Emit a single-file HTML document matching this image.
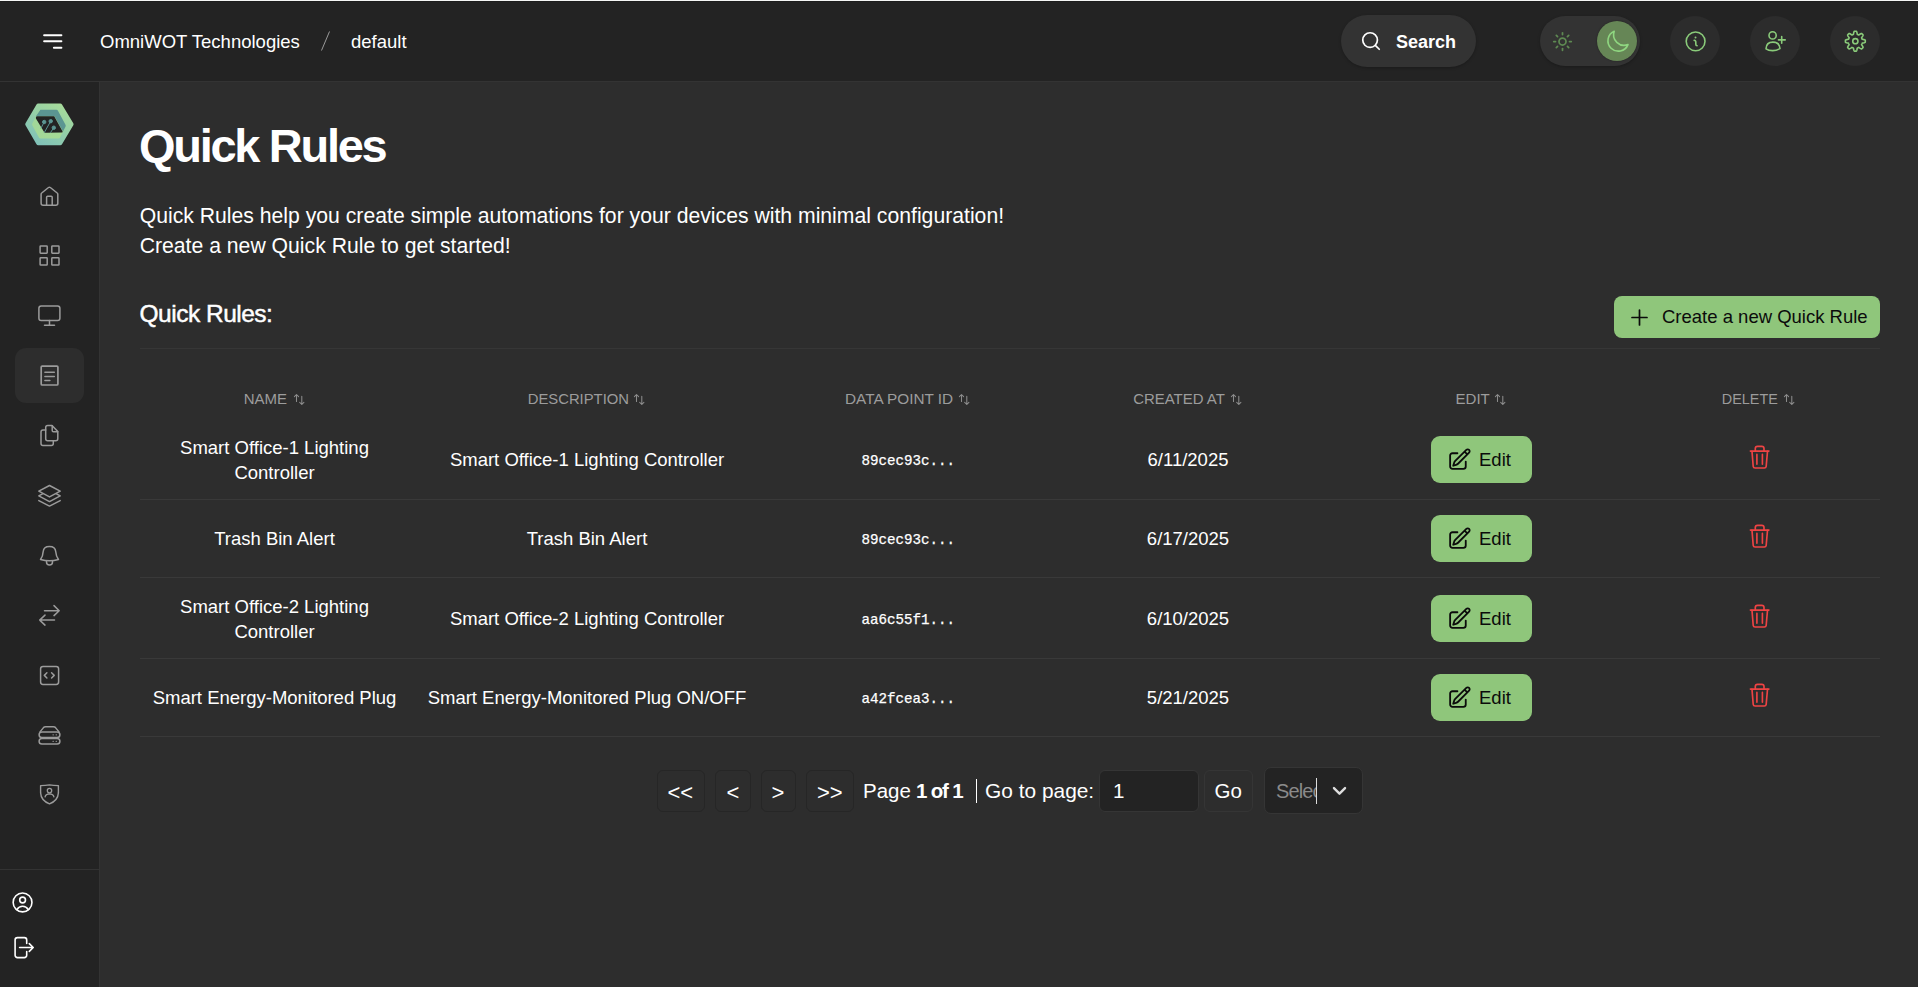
<!DOCTYPE html>
<html><head><meta charset="utf-8">
<style>
*{box-sizing:border-box;margin:0;padding:0}
html,body{width:1918px;height:987px;overflow:hidden;background:#2d2d2d;font-family:"Liberation Sans",sans-serif;color:#fff}
.abs{position:absolute}
#topline{left:0;top:0;width:1918px;height:1px;background:#f5f6f5}
#topline2{left:0;top:1px;width:1918px;height:1px;background:#1d1d1d}
#header{left:0;top:2px;width:1918px;height:79px;background:#232323}
#hborder{left:0;top:81px;width:1918px;height:1px;background:#333}
#sidebar{left:0;top:82px;width:99px;height:905px;background:#232323}
#sborder{left:99px;top:82px;width:1px;height:905px;background:#333}
.t{position:absolute;white-space:nowrap;line-height:1}
svg{position:absolute;overflow:visible}


.hd{position:absolute;white-space:nowrap;line-height:1;font-size:15.2px;color:#9c9c9c}
.cell{position:absolute;white-space:nowrap;line-height:25px;font-size:18.5px;color:#fff;text-align:center;transform:translateX(-50%)}
.mono{position:absolute;white-space:nowrap;line-height:1;font-family:"Liberation Mono",monospace;font-size:14.2px;color:#fff;transform:translateX(-50%);-webkit-text-stroke:0.25px #fff}
.rb{position:absolute;left:140px;width:1740px;height:1px;background:#393939}
.editbtn{position:absolute;left:1431px;width:101px;height:47px;border-radius:9px;background:#8fc67b}
.editbtn svg{left:16px;top:11.2px}
.editbtn span{position:absolute;left:48px;top:15px;font-size:18.5px;color:#0b0b0b;line-height:1;white-space:nowrap}
.pgb{position:absolute;top:770px;height:42px;border:1px solid #262626;border-radius:6px;background:#2d2d2d}

</style></head><body>
<div class="abs" id="topline"></div>
<div class="abs" id="topline2"></div>
<div class="abs" id="header"></div>
<div class="abs" id="hborder"></div>
<div class="abs" id="sidebar"></div>
<div class="abs" id="sborder"></div>

<!-- header content -->
<svg style="left:43px;top:34px" width="20" height="15" viewBox="0 0 20 15"><g stroke="#fff" stroke-width="2" stroke-linecap="round"><line x1="1.1" y1="1.3" x2="18.4" y2="1.3"/><line x1="1.1" y1="7.3" x2="18.4" y2="7.3"/><line x1="10.9" y1="13.8" x2="18.4" y2="13.8"/></g></svg>
<div class="t" style="left:100px;top:33px;font-size:18.5px">OmniWOT Technologies</div>
<svg style="left:321px;top:31px" width="9" height="20"><line x1="8.5" y1="0.5" x2="0.5" y2="19.5" stroke="#9a9a9a" stroke-width="1"/></svg>
<div class="t" style="left:351px;top:33px;font-size:18.5px">default</div>


<!-- search pill -->
<div class="abs" style="left:1341px;top:15px;width:135px;height:52px;border-radius:26px;background:#333;box-shadow:0 1px 3px rgba(0,0,0,.25)"></div>
<svg style="left:1359.9px;top:29.8px" width="22" height="22" viewBox="0 0 24 24" fill="none" stroke="#fff" stroke-width="1.85" stroke-linecap="round"><circle cx="11" cy="11" r="8"/><path d="m21 21-4.3-4.3"/></svg>
<div class="t" style="left:1396px;top:33px;font-size:18px;font-weight:700">Search</div>
<!-- theme toggle -->
<div class="abs" style="left:1540px;top:16px;width:100px;height:50px;border-radius:25px;background:#333;box-shadow:0 1px 3px rgba(0,0,0,.25)"></div>
<svg style="left:1552px;top:31px" width="21" height="21" viewBox="0 0 24 24" fill="none" stroke="#5e8a52" stroke-width="2" stroke-linecap="round"><circle cx="12" cy="12" r="4"/><path d="M12 2v2"/><path d="M12 20v2"/><path d="m4.93 4.93 1.41 1.41"/><path d="m17.66 17.66 1.41 1.41"/><path d="M2 12h2"/><path d="M20 12h2"/><path d="m6.34 17.66-1.41 1.41"/><path d="m19.07 4.93-1.41 1.41"/></svg>
<div class="abs" style="left:1597px;top:21px;width:40px;height:40px;border-radius:20px;background:#668656;box-shadow:0 0 2px rgba(0,0,0,.4)"></div>
<svg style="left:1590px;top:16px" width="50" height="50" viewBox="1590 16 50 50" fill="none" stroke="#8fd680" stroke-width="1.6" stroke-linecap="round" stroke-linejoin="round"><path d="M1614.2 31.2A10.4 10.4 0 1 0 1628 44.6A10.6 10.6 0 0 1 1614.2 31.2Z"/></svg>
<!-- icon circles -->
<div class="abs" style="left:1670px;top:16px;width:50px;height:50px;border-radius:25px;background:#2c2c2c"></div>
<div class="abs" style="left:1750px;top:16px;width:50px;height:50px;border-radius:25px;background:#2c2c2c"></div>
<div class="abs" style="left:1830px;top:16px;width:50px;height:50px;border-radius:25px;background:#2c2c2c"></div>
<svg style="left:1660px;top:16px" width="230" height="50" viewBox="1660 16 230 50" fill="none" stroke="#8acb7a" stroke-width="1.6" stroke-linecap="round" stroke-linejoin="round">
<circle cx="1695.6" cy="41.35" r="9.4"/><path d="M1695.5 37.5h.05" stroke-width="1.9"/><path d="M1694.2 40.4Q1695.8 40.3 1695.8 41.9V44.3Q1695.8 45.8 1697.1 45.8"/>
<circle cx="1772.6" cy="35.4" r="3.6"/><path d="M1766 48.8Q1766.3 42.1 1772.9 42.1Q1779.6 42.1 1780 48.6Q1776 50.7 1772.5 50.6Q1768.5 50.6 1766 48.8Z"/><path d="M1781.7 36.6v6.7M1778.5 39.9h6.7"/>
<path d="M1865.30 41.20 L1865.30 41.46 L1865.29 41.72 L1865.27 41.98 L1865.25 42.24 L1864.93 42.46 L1864.45 42.64 L1863.95 42.79 L1863.43 42.92 L1862.92 43.02 L1862.44 43.10 L1862.11 43.20 L1862.05 43.38 L1862.00 43.55 L1861.93 43.73 L1861.86 43.90 L1861.79 44.07 L1861.71 44.24 L1861.63 44.40 L1861.55 44.56 L1861.71 44.87 L1861.99 45.27 L1862.28 45.70 L1862.55 46.15 L1862.81 46.62 L1863.01 47.08 L1863.08 47.46 L1862.92 47.66 L1862.74 47.86 L1862.57 48.05 L1862.39 48.24 L1862.20 48.42 L1862.01 48.59 L1861.81 48.77 L1861.61 48.93 L1861.23 48.86 L1860.77 48.66 L1860.30 48.40 L1859.85 48.13 L1859.42 47.84 L1859.02 47.56 L1858.71 47.40 L1858.55 47.48 L1858.39 47.56 L1858.22 47.64 L1858.05 47.71 L1857.88 47.78 L1857.70 47.85 L1857.53 47.90 L1857.35 47.96 L1857.25 48.29 L1857.17 48.77 L1857.07 49.28 L1856.94 49.80 L1856.79 50.30 L1856.61 50.78 L1856.39 51.10 L1856.13 51.12 L1855.87 51.14 L1855.61 51.15 L1855.35 51.15 L1855.09 51.15 L1854.83 51.14 L1854.57 51.12 L1854.31 51.10 L1854.09 50.78 L1853.91 50.30 L1853.76 49.80 L1853.63 49.28 L1853.53 48.77 L1853.45 48.29 L1853.35 47.96 L1853.17 47.90 L1853.00 47.85 L1852.82 47.78 L1852.65 47.71 L1852.48 47.64 L1852.31 47.56 L1852.15 47.48 L1851.99 47.40 L1851.68 47.56 L1851.28 47.84 L1850.85 48.13 L1850.40 48.40 L1849.93 48.66 L1849.47 48.86 L1849.09 48.93 L1848.89 48.77 L1848.69 48.59 L1848.50 48.42 L1848.31 48.24 L1848.13 48.05 L1847.96 47.86 L1847.78 47.66 L1847.62 47.46 L1847.69 47.08 L1847.89 46.62 L1848.15 46.15 L1848.42 45.70 L1848.71 45.27 L1848.99 44.87 L1849.15 44.56 L1849.07 44.40 L1848.99 44.24 L1848.91 44.07 L1848.84 43.90 L1848.77 43.73 L1848.70 43.55 L1848.65 43.38 L1848.59 43.20 L1848.26 43.10 L1847.78 43.02 L1847.27 42.92 L1846.75 42.79 L1846.25 42.64 L1845.77 42.46 L1845.45 42.24 L1845.43 41.98 L1845.41 41.72 L1845.40 41.46 L1845.40 41.20 L1845.40 40.94 L1845.41 40.68 L1845.43 40.42 L1845.45 40.16 L1845.77 39.94 L1846.25 39.76 L1846.75 39.61 L1847.27 39.48 L1847.78 39.38 L1848.26 39.30 L1848.59 39.20 L1848.65 39.02 L1848.70 38.85 L1848.77 38.67 L1848.84 38.50 L1848.91 38.33 L1848.99 38.16 L1849.07 38.00 L1849.15 37.84 L1848.99 37.53 L1848.71 37.13 L1848.42 36.70 L1848.15 36.25 L1847.89 35.78 L1847.69 35.32 L1847.62 34.94 L1847.78 34.74 L1847.96 34.54 L1848.13 34.35 L1848.31 34.16 L1848.50 33.98 L1848.69 33.81 L1848.89 33.63 L1849.09 33.47 L1849.47 33.54 L1849.93 33.74 L1850.40 34.00 L1850.85 34.27 L1851.28 34.56 L1851.68 34.84 L1851.99 35.00 L1852.15 34.92 L1852.31 34.84 L1852.48 34.76 L1852.65 34.69 L1852.82 34.62 L1853.00 34.55 L1853.17 34.50 L1853.35 34.44 L1853.45 34.11 L1853.53 33.63 L1853.63 33.12 L1853.76 32.60 L1853.91 32.10 L1854.09 31.62 L1854.31 31.30 L1854.57 31.28 L1854.83 31.26 L1855.09 31.25 L1855.35 31.25 L1855.61 31.25 L1855.87 31.26 L1856.13 31.28 L1856.39 31.30 L1856.61 31.62 L1856.79 32.10 L1856.94 32.60 L1857.07 33.12 L1857.17 33.63 L1857.25 34.11 L1857.35 34.44 L1857.53 34.50 L1857.70 34.55 L1857.88 34.62 L1858.05 34.69 L1858.22 34.76 L1858.39 34.84 L1858.55 34.92 L1858.71 35.00 L1859.02 34.84 L1859.42 34.56 L1859.85 34.27 L1860.30 34.00 L1860.77 33.74 L1861.23 33.54 L1861.61 33.47 L1861.81 33.63 L1862.01 33.81 L1862.20 33.98 L1862.39 34.16 L1862.57 34.35 L1862.74 34.54 L1862.92 34.74 L1863.08 34.94 L1863.01 35.32 L1862.81 35.78 L1862.55 36.25 L1862.28 36.70 L1861.99 37.13 L1861.71 37.53 L1861.55 37.84 L1861.63 38.00 L1861.71 38.16 L1861.79 38.33 L1861.86 38.50 L1861.93 38.67 L1862.00 38.85 L1862.05 39.02 L1862.11 39.20 L1862.44 39.30 L1862.92 39.38 L1863.43 39.48 L1863.95 39.61 L1864.45 39.76 L1864.93 39.94 L1865.25 40.16 L1865.27 40.42 L1865.29 40.68 L1865.30 40.94Z"/><circle cx="1855.35" cy="41.2" r="2.6"/>
</svg>

<!-- logo -->
<svg style="left:24px;top:101px" width="52" height="47" viewBox="0 0 52 47">
<defs><linearGradient id="lg1" x1="0.15" y1="1" x2="0.85" y2="0"><stop offset="0" stop-color="#7dbfba"/><stop offset="1" stop-color="#a9dd98"/></linearGradient>
<linearGradient id="lg2" x1="0" y1="0" x2="1" y2="1"><stop offset="0" stop-color="#a0d79b"/><stop offset="1" stop-color="#a6da94"/></linearGradient></defs>
<path d="M14.2 2.4H36.3Q37.4 2.4 38 3.4L49.3 22.3Q49.9 23.3 49.3 24.3L38 43.3Q37.4 44.3 36.3 44.3H14.2Q13.1 44.3 12.5 43.3L1.5 24.3Q0.9 23.3 1.5 22.3L12.5 3.4Q13.1 2.4 14.2 2.4Z" fill="url(#lg1)"/>
<path d="M16.5 8.8H32.5Q33.3 8.8 33.8 9.6L41.5 23.8Q42 24.8 41.5 25.8L35.9 36.8Q35.5 37.6 34.6 37.6H16.4Q15.6 37.6 15.1 36.8L8.3 24.2Q7.9 23.3 8.3 22.4L15.2 9.6Q15.6 8.8 16.5 8.8Z" fill="url(#lg2)"/>
<path d="M16.4 8.8H32.5Q33.3 8.8 33.8 9.6L41.5 23.8Q42 24.8 41.5 25.8L39 30.5 30.5 15.2H11.9Z" fill="#5b9592"/>
<path d="M13.2 15.2H30.2L38.5 30.2Q39.1 31.5 37.8 31.5L21.5 31.7Q20.6 31.7 20.1 31L11.9 17.4Q11.4 15.2 13.2 15.2Z" fill="#232323"/>
<g fill="#5b9592" stroke="#5b9592" stroke-width="1"><circle cx="20.2" cy="21" r="1.7"/><circle cx="26.7" cy="20.2" r="1.7"/><circle cx="29.8" cy="26.7" r="1.7"/>
<path d="M20.2 21 16.9 27.4M26.7 20.2 20.2 31.7M29.8 26.7 26.4 31.7" fill="none"/></g>
</svg>
<!-- active nav bg -->
<div class="abs" style="left:15px;top:348px;width:69px;height:55px;border-radius:11px;background:#2d2d2d"></div>

<svg style="left:0;top:0" width="99" height="987" viewBox="0 0 99 987" fill="none" stroke="#9b9b9b" stroke-width="1.5" stroke-linecap="round" stroke-linejoin="round">
<path d="M52.2 205.3V197.2a1 1 0 0 0-1-1h-3.6a1 1 0 0 0-1 1v8.1"/>
<path d="M41.1 194.2a1.5 1.5 0 0 1 .6-1.2l6.8-5.5a1.5 1.5 0 0 1 1.8 0l6.9 5.5a1.5 1.5 0 0 1 .6 1.2v9.1a2 2 0 0 1-2 2H43.1a2 2 0 0 1-2-2z"/>
<rect x="40.1" y="246" width="7.1" height="7.2" rx="0.6"/><rect x="51.8" y="246" width="7.2" height="7.2" rx="0.6"/><rect x="40.1" y="257.8" width="7.1" height="7.2" rx="0.6"/><rect x="51.8" y="257.8" width="7.2" height="7.2" rx="0.6"/>
<rect x="38.9" y="306" width="21" height="14.6" rx="2.3"/><path d="M44.5 325.2h10M49.5 320.6v4.6"/>
<rect x="41.2" y="366.1" width="16.7" height="18.9" rx="1" stroke-width="1.7"/><path d="M44.9 372.3h9.4M44.9 376.5h9.4M44.9 380.6h5"/>
<path d="M45.7 430H43a2 2 0 0 0-2 2v11.6a2 2 0 0 0 2 2h8.3a2 2 0 0 0 2-2v-2.9"/>
<path d="M47.7 425.4h4.3l5.8 6.2v7.1a2 2 0 0 1-2 2H47.7a2 2 0 0 1-2-2V427.4a2 2 0 0 1 2-2z"/><path d="M52.2 425.8v4.6a1.3 1.3 0 0 0 1.3 1.3h4.2"/>
<g fill="#232323"><path d="M49.5 490.2 60.2 495.9 49.5 501.6 38.8 495.9Z"/><path d="M49.5 485.5 60.2 491.2 49.5 496.9 38.8 491.2Z"/></g>
<path d="M38.8 500.6 49.5 506.1 60.2 500.6"/>
<path d="M40.5 559.5Q43 556 43.2 551.5Q43.6 546.4 49.4 546.4Q55.3 546.4 55.7 551.5Q56 556 58.5 559.5Q49.5 562.2 40.5 559.5Z"/><path d="M46.5 560.9v1.1a3 3 0 0 0 6 0v-1.1"/>
<path d="M44.5 610.7h14.7M54 605.6l5.2 5.1-5.2 4.9"/><path d="M54.5 620.1H39.7M45 615.1l-5.3 5 5.3 5"/>
<rect x="40.6" y="666.4" width="18" height="18.1" rx="2.4"/><path d="M46.9 672.8l-2.6 2.6 2.6 2.6M51.6 672.8l2.6 2.6-2.6 2.6"/>
<path d="M40 731.9 43.5 727.6Q44.3 726.7 45.5 726.7H53.5Q54.7 726.7 55.5 727.6L59 731.9"/>
<rect x="39.1" y="732.1" width="20.8" height="5.5" rx="2.75"/><rect x="39.1" y="738.6" width="20.8" height="5.5" rx="2.75"/>
<path d="M53.1 734.85h.1M56.2 734.85h.1M53.1 741.35h.1M56.2 741.35h.1" stroke-width="1.4"/>
<path d="M40.6 785.6Q45.5 785.5 49.5 784.9Q53.5 785.5 58.4 785.6V792.9Q58 800.5 49.5 803.9Q41 800.5 40.6 792.9Z" stroke-width="1.4"/>
<circle cx="49.5" cy="790.6" r="2.2" stroke-width="1.3"/><path d="M45.1 796.8Q45.6 793.9 49.5 793.8Q53.4 793.9 53.9 796.8" stroke-width="1.3"/>
</svg>
<!-- sidebar bottom -->
<div class="abs" style="left:0;top:869px;width:99px;height:1px;background:#333"></div>
<svg style="left:0;top:880px" width="99" height="100" viewBox="0 880 99 100" fill="none" stroke="#fff" stroke-width="1.6" stroke-linecap="round" stroke-linejoin="round">
<circle cx="22.55" cy="902.45" r="9.4"/><circle cx="22.6" cy="900" r="2.9"/><path d="M16.9 909.6Q19 906.3 22.6 906.3Q26.2 906.3 28.3 909.6"/>
<path d="M26.7 943.4V939.9a2.3 2.3 0 0 0-2.3-2.3H17.4a2.3 2.3 0 0 0-2.3 2.3V955.3a2.3 2.3 0 0 0 2.3 2.3H24.4a2.3 2.3 0 0 0 2.3-2.3V951.6"/>
<path d="M19.6 947.5H33M29.3 943.6l3.9 3.9-3.9 3.9"/>
</svg>


<!-- main -->
<div class="t" style="left:139px;top:122.1px;font-size:47px;font-weight:700;letter-spacing:-2.3px">Quick Rules</div>
<div class="t" style="left:139.7px;top:200.75px;font-size:21.2px;line-height:30px">Quick Rules help you create simple automations for your devices with minimal configuration!<br>Create a new Quick Rule to get started!</div>
<div class="t" style="left:139.5px;top:301.7px;font-size:24.5px;-webkit-text-stroke:0.45px #fff;letter-spacing:-0.5px">Quick Rules:</div>
<div class="abs" style="left:1614px;top:296px;width:266px;height:42px;border-radius:8px;background:#8fc67b"></div>
<svg style="left:1631px;top:309px" width="17" height="17" viewBox="0 0 17 17" fill="none" stroke="#0b0b0b" stroke-width="1.7" stroke-linecap="round"><path d="M8.5 1v15"/><path d="M1 8.5h15"/></svg>
<div class="t" style="left:1662px;top:308.2px;font-size:18.5px;color:#0b0b0b">Create a new Quick Rule</div>
<div class="rb" style="top:348px;background:#363636"></div>
<div class="hd" style="left:243.7px;top:391.30px;font-size:15.0px">NAME</div>
<svg style="left:294px;top:394px" width="11" height="11" viewBox="0 0 11 11" fill="none" stroke="#8c8c8c" stroke-width="1.05" stroke-linecap="round" stroke-linejoin="round"><path d="M2.5 7.4V0.5M0.4 2.6 2.5 0.5l2.1 2.1"/><path d="M7.8 2.2v8.3M5.7 8.4 7.8 10.5l2.1-2.1"/></svg>
<div class="hd" style="left:527.7px;top:392.34px;font-size:14.84px">DESCRIPTION</div>
<svg style="left:634px;top:394px" width="11" height="11" viewBox="0 0 11 11" fill="none" stroke="#8c8c8c" stroke-width="1.05" stroke-linecap="round" stroke-linejoin="round"><path d="M2.5 7.4V0.5M0.4 2.6 2.5 0.5l2.1 2.1"/><path d="M7.8 2.2v8.3M5.7 8.4 7.8 10.5l2.1-2.1"/></svg>
<div class="hd" style="left:845px;top:391.02px;font-size:15.34px">DATA POINT ID</div>
<svg style="left:959px;top:394px" width="11" height="11" viewBox="0 0 11 11" fill="none" stroke="#8c8c8c" stroke-width="1.05" stroke-linecap="round" stroke-linejoin="round"><path d="M2.5 7.4V0.5M0.4 2.6 2.5 0.5l2.1 2.1"/><path d="M7.8 2.2v8.3M5.7 8.4 7.8 10.5l2.1-2.1"/></svg>
<div class="hd" style="left:1133.2px;top:392.25px;font-size:14.95px">CREATED AT</div>
<svg style="left:1231px;top:394px" width="11" height="11" viewBox="0 0 11 11" fill="none" stroke="#8c8c8c" stroke-width="1.05" stroke-linecap="round" stroke-linejoin="round"><path d="M2.5 7.4V0.5M0.4 2.6 2.5 0.5l2.1 2.1"/><path d="M7.8 2.2v8.3M5.7 8.4 7.8 10.5l2.1-2.1"/></svg>
<div class="hd" style="left:1455.5px;top:391.25px;font-size:15.06px">EDIT</div>
<svg style="left:1494.8px;top:394px" width="11" height="11" viewBox="0 0 11 11" fill="none" stroke="#8c8c8c" stroke-width="1.05" stroke-linecap="round" stroke-linejoin="round"><path d="M2.5 7.4V0.5M0.4 2.6 2.5 0.5l2.1 2.1"/><path d="M7.8 2.2v8.3M5.7 8.4 7.8 10.5l2.1-2.1"/></svg>
<div class="hd" style="left:1721.8px;top:391.81px;font-size:14.4px">DELETE</div>
<svg style="left:1783.8px;top:394px" width="11" height="11" viewBox="0 0 11 11" fill="none" stroke="#8c8c8c" stroke-width="1.05" stroke-linecap="round" stroke-linejoin="round"><path d="M2.5 7.4V0.5M0.4 2.6 2.5 0.5l2.1 2.1"/><path d="M7.8 2.2v8.3M5.7 8.4 7.8 10.5l2.1-2.1"/></svg>
<div class="cell" style="left:274.5px;top:434.5px">Smart Office-1 Lighting<br>Controller</div>
<div class="cell" style="left:587px;top:447.0px">Smart Office-1 Lighting Controller</div>
<div class="mono" style="left:908.3px;top:454.3px">89cec93c...</div>
<div class="cell" style="left:1188px;top:447.0px">6/11/2025</div>
<div class="editbtn" style="top:436px"><svg width="25" height="25" viewBox="0 0 24 24" fill="none" stroke="#0b0b0b" stroke-width="1.75" stroke-linecap="round" stroke-linejoin="round"><path d="M16.862 4.487l1.687-1.688a1.875 1.875 0 1 1 2.652 2.652L10.582 16.07a4.5 4.5 0 0 1-1.897 1.13L6 18l.8-2.685a4.5 4.5 0 0 1 1.13-1.897l8.932-8.931zm0 0L19.5 7.125M18 14v4.75A2.25 2.25 0 0 1 15.75 21H5.25A2.25 2.25 0 0 1 3 18.75V8.25A2.25 2.25 0 0 1 5.25 6H10"/></svg><span>Edit</span></div>
<svg style="left:1735px;top:435.6px" width="50" height="45" viewBox="0 0 50 45" fill="none" stroke="#ef4444" stroke-width="1.65" stroke-linecap="round" stroke-linejoin="round"><path d="M15.4 15.1H33.9"/><path d="M17 15.4 18.2 30.3Q18.4 32 20.1 32H29.3Q31 32 31.2 30.3L32.5 15.4"/><path d="M20.3 15V12.6Q20.3 10.4 22.5 10.4H26.8Q29 10.4 29 12.6V15"/><path d="M21.9 18.4V28.2M27.4 18.4V28.2"/></svg>
<div class="rb" style="top:499px"></div>
<div class="cell" style="left:274.5px;top:526.0px">Trash Bin Alert</div>
<div class="cell" style="left:587px;top:526.0px">Trash Bin Alert</div>
<div class="mono" style="left:908.3px;top:533.3px">89cec93c...</div>
<div class="cell" style="left:1188px;top:526.0px">6/17/2025</div>
<div class="editbtn" style="top:515px"><svg width="25" height="25" viewBox="0 0 24 24" fill="none" stroke="#0b0b0b" stroke-width="1.75" stroke-linecap="round" stroke-linejoin="round"><path d="M16.862 4.487l1.687-1.688a1.875 1.875 0 1 1 2.652 2.652L10.582 16.07a4.5 4.5 0 0 1-1.897 1.13L6 18l.8-2.685a4.5 4.5 0 0 1 1.13-1.897l8.932-8.931zm0 0L19.5 7.125M18 14v4.75A2.25 2.25 0 0 1 15.75 21H5.25A2.25 2.25 0 0 1 3 18.75V8.25A2.25 2.25 0 0 1 5.25 6H10"/></svg><span>Edit</span></div>
<svg style="left:1735px;top:514.6px" width="50" height="45" viewBox="0 0 50 45" fill="none" stroke="#ef4444" stroke-width="1.65" stroke-linecap="round" stroke-linejoin="round"><path d="M15.4 15.1H33.9"/><path d="M17 15.4 18.2 30.3Q18.4 32 20.1 32H29.3Q31 32 31.2 30.3L32.5 15.4"/><path d="M20.3 15V12.6Q20.3 10.4 22.5 10.4H26.8Q29 10.4 29 12.6V15"/><path d="M21.9 18.4V28.2M27.4 18.4V28.2"/></svg>
<div class="rb" style="top:577px"></div>
<div class="cell" style="left:274.5px;top:593.5px">Smart Office-2 Lighting<br>Controller</div>
<div class="cell" style="left:587px;top:606.0px">Smart Office-2 Lighting Controller</div>
<div class="mono" style="left:908.3px;top:613.3px">aa6c55f1...</div>
<div class="cell" style="left:1188px;top:606.0px">6/10/2025</div>
<div class="editbtn" style="top:595px"><svg width="25" height="25" viewBox="0 0 24 24" fill="none" stroke="#0b0b0b" stroke-width="1.75" stroke-linecap="round" stroke-linejoin="round"><path d="M16.862 4.487l1.687-1.688a1.875 1.875 0 1 1 2.652 2.652L10.582 16.07a4.5 4.5 0 0 1-1.897 1.13L6 18l.8-2.685a4.5 4.5 0 0 1 1.13-1.897l8.932-8.931zm0 0L19.5 7.125M18 14v4.75A2.25 2.25 0 0 1 15.75 21H5.25A2.25 2.25 0 0 1 3 18.75V8.25A2.25 2.25 0 0 1 5.25 6H10"/></svg><span>Edit</span></div>
<svg style="left:1735px;top:594.6px" width="50" height="45" viewBox="0 0 50 45" fill="none" stroke="#ef4444" stroke-width="1.65" stroke-linecap="round" stroke-linejoin="round"><path d="M15.4 15.1H33.9"/><path d="M17 15.4 18.2 30.3Q18.4 32 20.1 32H29.3Q31 32 31.2 30.3L32.5 15.4"/><path d="M20.3 15V12.6Q20.3 10.4 22.5 10.4H26.8Q29 10.4 29 12.6V15"/><path d="M21.9 18.4V28.2M27.4 18.4V28.2"/></svg>
<div class="rb" style="top:658px"></div>
<div class="cell" style="left:274.5px;top:685.0px">Smart Energy-Monitored Plug</div>
<div class="cell" style="left:587px;top:685.0px">Smart Energy-Monitored Plug ON/OFF</div>
<div class="mono" style="left:908.3px;top:692.3px">a42fcea3...</div>
<div class="cell" style="left:1188px;top:685.0px">5/21/2025</div>
<div class="editbtn" style="top:674px"><svg width="25" height="25" viewBox="0 0 24 24" fill="none" stroke="#0b0b0b" stroke-width="1.75" stroke-linecap="round" stroke-linejoin="round"><path d="M16.862 4.487l1.687-1.688a1.875 1.875 0 1 1 2.652 2.652L10.582 16.07a4.5 4.5 0 0 1-1.897 1.13L6 18l.8-2.685a4.5 4.5 0 0 1 1.13-1.897l8.932-8.931zm0 0L19.5 7.125M18 14v4.75A2.25 2.25 0 0 1 15.75 21H5.25A2.25 2.25 0 0 1 3 18.75V8.25A2.25 2.25 0 0 1 5.25 6H10"/></svg><span>Edit</span></div>
<svg style="left:1735px;top:673.6px" width="50" height="45" viewBox="0 0 50 45" fill="none" stroke="#ef4444" stroke-width="1.65" stroke-linecap="round" stroke-linejoin="round"><path d="M15.4 15.1H33.9"/><path d="M17 15.4 18.2 30.3Q18.4 32 20.1 32H29.3Q31 32 31.2 30.3L32.5 15.4"/><path d="M20.3 15V12.6Q20.3 10.4 22.5 10.4H26.8Q29 10.4 29 12.6V15"/><path d="M21.9 18.4V28.2M27.4 18.4V28.2"/></svg>
<div class="rb" style="top:736px"></div>

<!-- pagination -->
<div class="pgb" style="left:657px;width:48px"></div>
<div class="pgb" style="left:715px;width:36px"></div>
<div class="pgb" style="left:761px;width:35px"></div>
<div class="pgb" style="left:806px;width:48px"></div>
<div class="t" style="left:667.5px;top:782px;font-size:22px">&lt;&lt;</div>
<div class="t" style="left:726.5px;top:782px;font-size:22px">&lt;</div>
<div class="t" style="left:771.5px;top:782px;font-size:22px">&gt;</div>
<div class="t" style="left:817px;top:782px;font-size:22px">&gt;&gt;</div>
<div class="t" style="left:863px;top:780.5px;font-size:20.5px">Page</div>
<div class="t" style="left:916px;top:780.5px;font-size:20.5px;font-weight:700;letter-spacing:-1.2px">1 of 1</div>
<div class="abs" style="left:975.5px;top:779px;width:1.6px;height:24px;background:#fff"></div>
<div class="t" style="left:985px;top:780.5px;font-size:20.9px">Go to page:</div>
<div class="abs" style="left:1099px;top:770px;width:100px;height:42px;border:1px solid #353535;border-radius:6px;background:#232323"></div>
<div class="t" style="left:1113px;top:780.5px;font-size:20.5px">1</div>
<div class="abs" style="left:1204px;top:770px;width:49px;height:42px;border:1px solid #353535;border-radius:6px;background:#2d2d2d"></div>
<div class="t" style="left:1214.5px;top:780.5px;font-size:20.5px">Go</div>
<div class="abs" style="left:1264px;top:767px;width:99px;height:47px;border:1px solid #353535;border-radius:7px;background:#232323"></div>
<div class="t" style="left:1276px;top:781px;font-size:20px;color:#8a8a8a;width:40.5px;overflow:hidden;letter-spacing:-0.9px">Select</div>
<div class="abs" style="left:1316px;top:778px;width:1px;height:26px;background:#ddd"></div>
<svg style="left:1330px;top:781px" width="19" height="19" viewBox="0 0 24 24" fill="none" stroke="#ddd" stroke-width="3" stroke-linecap="round" stroke-linejoin="round"><path d="m5 9 7 7 7-7"/></svg>
</body></html>
